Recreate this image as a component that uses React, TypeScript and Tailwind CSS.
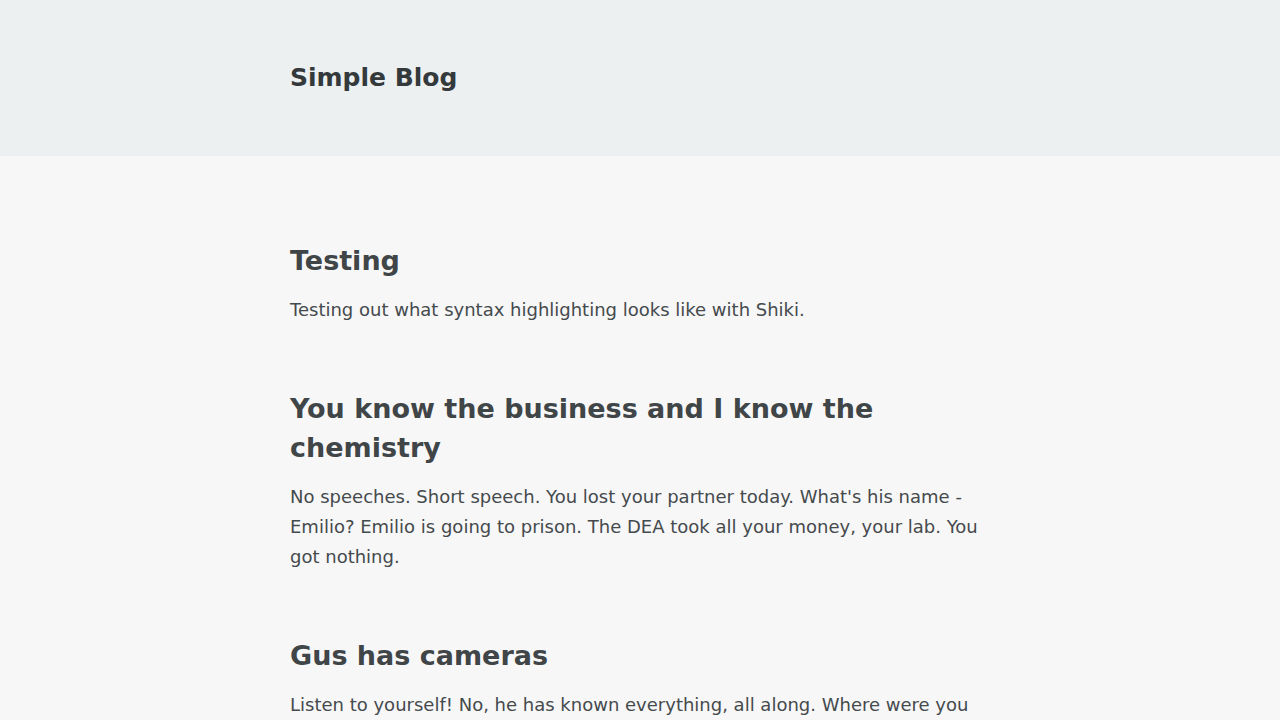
const posts = [
  {
    title: "Testing",
    excerpt: "Testing out what syntax highlighting looks like with Shiki.",
  },
  {
    title: "You know the business and I know the chemistry",
    excerpt:
      "No speeches. Short speech. You lost your partner today. What's his name - Emilio? Emilio is going to prison. The DEA took all your money, your lab. You got nothing.",
  },
  {
    title: "Gus has cameras",
    excerpt:
      "Listen to yourself! No, he has known everything, all along. Where were you when he was watching you? Where were you when you needed him most?",
  },
];

export default function App() {
  return (
    <div className="min-h-screen bg-[#f7f7f7] font-['DejaVu_Sans',sans-serif]">
      <header className="bg-[#ecf0f1] h-[156px] flex items-center">
        <div className="w-[700px] mx-auto">
          <h1 className="text-[25px] font-bold text-[#34393b]">Simple Blog</h1>
        </div>
      </header>
      <main className="w-[700px] mx-auto pt-[85px]">
        {posts.map((post) => (
          <article key={post.title} className="mb-[64px]">
            <h2 className="text-[27px] leading-[39px] font-bold text-[#404548] mb-[15px]">{post.title}</h2>
            <p className="text-[18px] leading-[30px] text-[#454a4d]">{post.excerpt}</p>
          </article>
        ))}
      </main>
    </div>
  );
}
